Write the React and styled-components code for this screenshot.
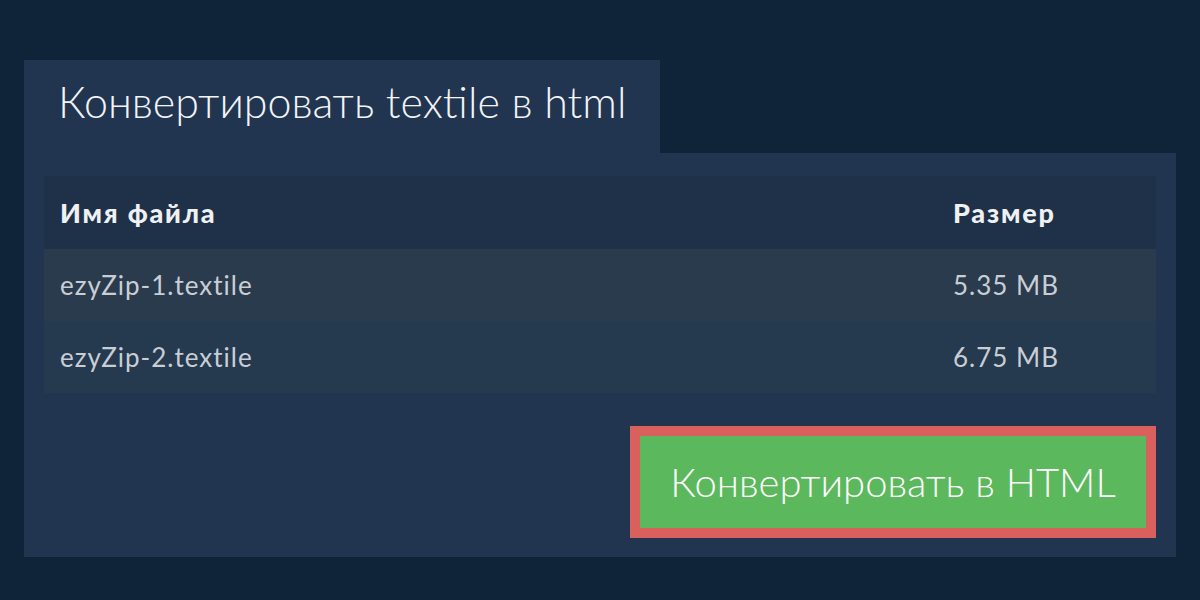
import React from "react";
import styled, { createGlobalStyle } from "styled-components";

const GlobalStyle = createGlobalStyle`
  html, body {
    margin: 0;
    padding: 0;
    background: #0f2339;
  }
  body {
    font-family: Lato, "Open Sans", sans-serif;
  }
`;

const files = [
  { name: "ezyZip-1.textile", size: "5.35 MB" },
  { name: "ezyZip-2.textile", size: "6.75 MB" },
];

const App = () => {
  return (
    <Page>
      <GlobalStyle />
      <Tab>Конвертировать textile в html</Tab>
      <Panel>
        <Table>
          <HeadRow>
            <Cell>Имя файла</Cell>
            <Cell>Размер</Cell>
          </HeadRow>
          {files.map((file, i) => (
            <Row key={file.name} odd={i % 2 === 0}>
              <Cell>{file.name}</Cell>
              <Cell>{file.size}</Cell>
            </Row>
          ))}
        </Table>
        <Actions>
          <ConvertButton>Конвертировать в HTML</ConvertButton>
        </Actions>
      </Panel>
    </Page>
  );
};

const Page = styled.div`
  width: 1200px;
  height: 600px;
  box-sizing: border-box;
  padding: 60px 24px 0 24px;
  background: #0f2339;
`;

const Tab = styled.div`
  width: 636px;
  height: 93px;
  box-sizing: border-box;
  padding: 16px 0 0 34px;
  background: #213550;
  color: #f2f4f6;
  font-size: 43px;
  font-weight: 300;
  line-height: 52px;
`;

const Panel = styled.div`
  width: 1152px;
  box-sizing: border-box;
  padding: 23px 20px 19px 20px;
  background: #213550;
`;

const Table = styled.div`
  display: flex;
  flex-direction: column;
`;

const Row = styled.div`
  display: grid;
  grid-template-columns: 893px 1fr;
  height: 72px;
  align-items: center;
  background: ${(p) => (p.odd ? "#2a3b4e" : "#25394f")};
  color: #c9ced5;
  font-size: 26px;
  letter-spacing: 1px;
`;

const HeadRow = styled(Row)`
  height: 73px;
  background: #1e3149;
  color: #eef0f2;
  font-size: 27px;
  font-weight: 900;
  letter-spacing: 1.8px;
`;

const Cell = styled.div`
  padding-left: 16px;
`;

const Actions = styled.div`
  display: flex;
  justify-content: flex-end;
  margin-top: 33px;
`;

const ConvertButton = styled.button`
  width: 526px;
  height: 112px;
  box-sizing: border-box;
  border: 10px solid #d9605c;
  background: #5cb85c;
  color: #ffffff;
  font-family: Lato, "Open Sans", sans-serif;
  font-size: 40px;
  font-weight: 300;
  padding: 0;
  cursor: pointer;
`;

export default App;
